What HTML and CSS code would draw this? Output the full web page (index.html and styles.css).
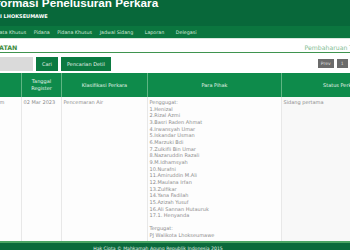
FILE: index.html
```html
<!DOCTYPE html>
<html lang="id">
<head>
<meta charset="utf-8">
<title>Sistem Informasi Penelusuran Perkara</title>
<link rel="stylesheet" href="styles.css">
</head>
<body>
<div class="page">
  <header class="top">
    <div class="title">Informasi Penelusuran Perkara</div>
    <div class="court">NEGERI LHOKSEUMAWE</div>
  </header>
  <nav class="menu">
    <a class="first">Perdata Khusus</a>
    <a>Pidana</a>
    <a>Pidana Khusus</a>
    <a>Jadwal Sidang</a>
    <a class="spaced">Laporan</a>
    <a class="spaced">Delegasi</a>
  </nav>
  <div class="gap-band"></div>
  <main class="content">
    <div class="panel-head">
      <span class="panel-title">PENCATATAN</span>
      <span class="updated">Pembaharuan Terakhir</span>
    </div>
    <div class="toolbar">
      <div class="search">
        <input class="search-input" type="text">
        <button class="btn">Cari</button>
        <button class="btn">Pencarian Detil</button>
      </div>
      <div class="pager">
        <span class="pg">Prev</span>
        <span class="pg wide">1</span>
        <span class="pg">Next</span>
      </div>
    </div>
    <table class="grid">
      <colgroup>
        <col class="c1"><col class="c2"><col class="c3"><col class="c4"><col class="c5">
      </colgroup>
      <thead>
        <tr>
          <th>Nomor Perkara</th>
          <th>Tanggal Register</th>
          <th>Klasifikasi Perkara</th>
          <th>Para Pihak</th>
          <th>Status Perkara</th>
        </tr>
      </thead>
      <tbody>
        <tr>
          <td class="num">2/Pdt.G/LH/2023/PN Lsm</td>
          <td>02 Mar 2023</td>
          <td>Pencemaran Air</td>
          <td class="pihak">Penggugat:<br>1.Henizal<br>2.Rizal Azmi<br>3.Basri Raden Ahmat<br>4.Irwansyah Umar<br>5.Iskandar Usman<br>6.Marzuki Bdi<br>7.Zulkifli Bin Umar<br>8.Nazaruddin Razali<br>9.M.Idhamsyah<br>10.Nurafni<br>11.Amiruddin M.Ali<br>12.Maulana Irfan<br>13.Zulfikar<br>14.Yana Fadilah<br>15.Azizah Yusuf<br>16.Ali Sannan Hutauruk<br>17.1. Henyanda<br><br>Tergugat:<br>PJ Walikota Lhokseumawe</td>
          <td class="status">Sidang pertama</td>
        </tr>
      </tbody>
    </table>
  </main>
  <footer class="foot">Hak Cipta © Mahkamah Agung Republik Indonesia 2015</footer>
</div>
</body>
</html>
```

FILE: styles.css
```css
html, body {
  margin: 0;
  padding: 0;
  background: #ffffff;
  overflow: hidden;
}
body {
  font-family: "DejaVu Sans", Verdana, sans-serif;
  width: 350px;
  height: 250px;
}
.page {
  width: 350px;
  overflow: hidden;
}
.top {
  background: #08683a;
  height: 26px;
  display: flex;
  flex-direction: column;
  overflow: hidden;
}
.title {
  color: #ffffff;
  font-family: "Liberation Sans", Arial, sans-serif;
  font-weight: bold;
  font-size: 11.7px;
  line-height: 12px;
  margin-top: -3px;
  margin-left: -14px;
  white-space: nowrap;
}
.court {
  color: #ffffff;
  font-weight: bold;
  font-size: 5px;
  line-height: 6px;
  margin-top: 4px;
  margin-left: -19px;
  white-space: nowrap;
}
.menu {
  background: #0b763f;
  height: 12px;
  display: flex;
  align-items: center;
  gap: 7.5px;
  white-space: nowrap;
}
.menu a {
  color: #d6eadb;
  font-size: 4.8px;
}
.menu .first {
  margin-left: -11px;
}
.menu .spaced {
  margin-left: 4px;
}
.gap-band {
  height: 1px;
  background: #d9e8dd;
}
.content {
  display: flex;
  flex-direction: column;
}
.panel-head {
  display: flex;
  justify-content: space-between;
  align-items: flex-end;
  height: 11px;
  border-bottom: 1.5px solid #3f944f;
  margin-top: 1px;
  padding-bottom: 1px;
  white-space: nowrap;
}
.panel-title {
  color: #3d8a3d;
  font-weight: bold;
  font-size: 6.3px;
  margin-left: -28px;
}
.updated {
  color: #82bd93;
  font-size: 6.2px;
  margin-right: -24px;
}
.toolbar {
  display: flex;
  justify-content: space-between;
  align-items: center;
  margin-top: 3px;
  height: 15px;
}
.search {
  display: flex;
  gap: 3px;
  align-items: stretch;
  height: 14px;
}
.search-input {
  width: 40px;
  margin: 0 0 0 -7px;
  border: none;
  background: #dadada;
  padding: 0;
  height: 14px;
}
.btn {
  background: #0b7a41;
  color: #e6f2ea;
  border: none;
  font-family: inherit;
  font-size: 5px;
  padding: 0 6px;
  height: 14px;
}
.pager {
  display: flex;
  gap: 3px;
  margin-right: -17px;
}
.pg {
  background: #6b6b6b;
  color: #dddddd;
  font-size: 4.5px;
  padding: 2px 3px;
}
.pg.wide {
  padding: 2px 4px;
}
.grid {
  margin-top: 2px;
  margin-left: -60px;
  border-collapse: collapse;
  table-layout: fixed;
  width: 460px;
}
.c1 { width: 81px; }
.c2 { width: 40px; }
.c3 { width: 86px; }
.c4 { width: 134px; }
.c5 { width: 119px; }
.grid th {
  background: #0e8b4b;
  color: #e4f3ea;
  font-weight: normal;
  font-size: 5px;
  line-height: 7px;
  height: 24px;
  padding: 0 2px;
  border-left: 1px solid #5fb583;
  text-align: center;
}
.grid td {
  vertical-align: top;
  color: #8c8c8c;
  font-size: 5px;
  line-height: 6.65px;
  padding: 2px 1px 2px 1.5px;
  border-left: 1px solid #e8e8e8;
  background: #fdfdfd;
}
.grid td.num {
  padding-left: 2px;
  white-space: nowrap;
  overflow: hidden;
}
.grid td.status {
  background: #f8f8f8;
}
.foot {
  background: #0a6a3b;
  border-top: 2px solid #4aa463;
  color: #e8f3ec;
  font-size: 4.6px;
  height: 12px;
  line-height: 12px;
  text-align: center;
  padding-right: 34px;
}
```
